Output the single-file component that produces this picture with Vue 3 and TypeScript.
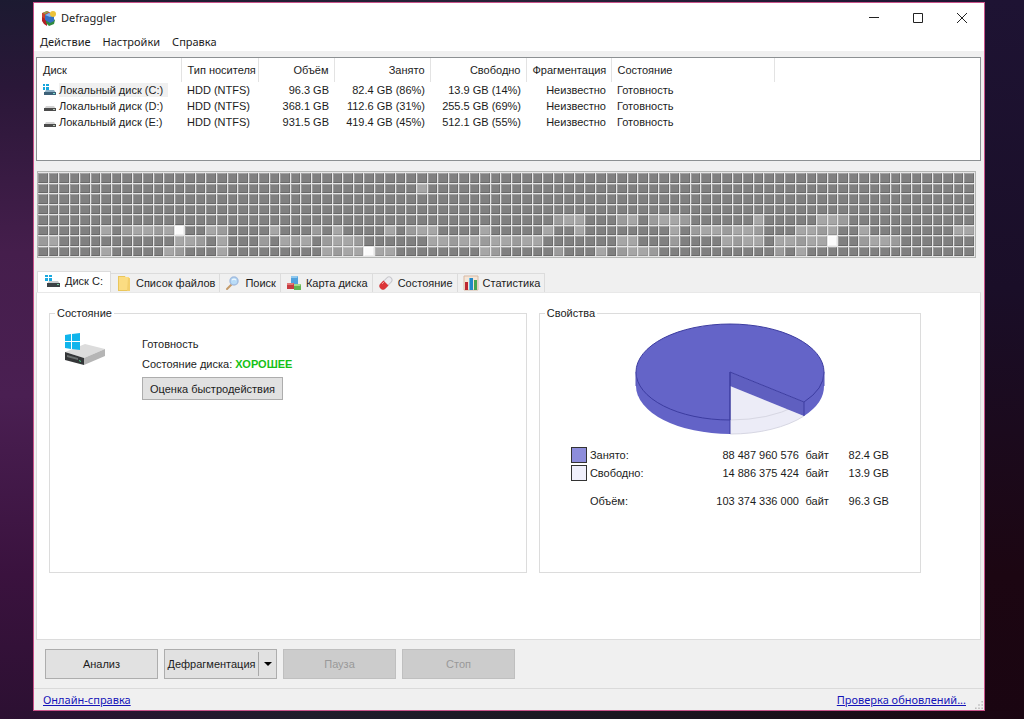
<script setup lang="ts">
import { ref } from 'vue'

interface Drive {
  name: string
  type: string
  size: string
  used: string
  free: string
  fragmentation: string
  state: string
  system: boolean
}

const drives: Drive[] = [
  { name: 'Локальный диск (C:)', type: 'HDD (NTFS)', size: '96.3 GB', used: '82.4 GB (86%)', free: '13.9 GB (14%)', fragmentation: 'Неизвестно', state: 'Готовность', system: true },
  { name: 'Локальный диск (D:)', type: 'HDD (NTFS)', size: '368.1 GB', used: '112.6 GB (31%)', free: '255.5 GB (69%)', fragmentation: 'Неизвестно', state: 'Готовность', system: false },
  { name: 'Локальный диск (E:)', type: 'HDD (NTFS)', size: '931.5 GB', used: '419.4 GB (45%)', free: '512.1 GB (55%)', fragmentation: 'Неизвестно', state: 'Готовность', system: false },
]

const COLUMNS = 89
const ROWS = 8

// Inclusive column ranges of partly filled blocks, per row
const partial: Record<number, [number, number][]> = {
  1: [[36, 36]],
  4: [[49, 51], [55, 56], [58, 61], [68, 68], [74, 76]],
  5: [[6, 6], [8, 12], [16, 17], [22, 22], [26, 26], [28, 28], [33, 33], [35, 37], [42, 42], [48, 48], [51, 51], [60, 60], [62, 68], [72, 75], [78, 78], [87, 88]],
  6: [[0, 1], [13, 15], [17, 17], [21, 21], [23, 25], [27, 30], [37, 47], [55, 56], [60, 60], [65, 68], [70, 74], [78, 81]],
  7: [[6, 6], [12, 13], [17, 17], [27, 30], [32, 33], [42, 43], [49, 49], [53, 53], [55, 58], [70, 70], [72, 72]],
}
const empty = ['5-13', '6-75', '7-31']

const blocks = Array.from({ length: COLUMNS * ROWS }, (_, i) => {
  const row = Math.floor(i / COLUMNS)
  const col = i % COLUMNS
  if (empty.includes(`${row}-${col}`)) return 'empty'
  const hit = (partial[row] ?? []).some(([from, to]) => col >= from && col <= to)
  if (!hit) return 'full'
  return (row * 5 + col * 7) % 3 === 0 ? 'half' : 'part'
})

const tabs = [
  { id: 'drive', label: 'Диск C:' },
  { id: 'files', label: 'Список файлов' },
  { id: 'search', label: 'Поиск' },
  { id: 'map', label: 'Карта диска' },
  { id: 'health', label: 'Состояние' },
  { id: 'stats', label: 'Статистика' },
]
const activeTab = ref('drive')
</script>

<template>
  <div class="desktop">
    <main class="window">
      <header class="titlebar">
        <svg class="logo" viewBox="0 0 16 16" aria-hidden="true">
          <path d="M1 3l5-2 4 2v6l-5 3-4-3z" fill="#c9432f" />
          <path d="M1 7l5 3v6l-3-2-2-3z" fill="#b32025" />
          <path d="M5 9l5-2 4 3-1 4-5 2-3-3z" fill="#2f8a3e" />
          <path d="M4 5l4-2 5 2v6l-4 2-5-3z" fill="#356fc4" />
          <path d="M4 5l4-2 5 2-4 2z" fill="#86b4ea" />
          <circle cx="12" cy="4" r="3" fill="#edc23a" />
          <path d="M2 3l4-2 2 1-4 2z" fill="#8ea64c" />
        </svg>
        <h1>Defraggler</h1>
        <div class="controls">
          <button type="button" aria-label="Свернуть"><svg viewBox="0 0 12 12"><path d="M1 5.500h10" /></svg></button>
          <button type="button" aria-label="Развернуть"><svg viewBox="0 0 12 12"><path d="M1.500 1.500h9v9h-9z" /></svg></button>
          <button type="button" aria-label="Закрыть"><svg viewBox="0 0 12 12"><path d="M1 1l10 10M11 1L1 11" /></svg></button>
        </div>
      </header>
      <nav class="menu">
        <button type="button">Действие</button>
        <button type="button">Настройки</button>
        <button type="button">Справка</button>
      </nav>

      <section class="drives">
        <table>
          <colgroup>
            <col class="c-name"><col class="c-type"><col class="c-size"><col class="c-used"><col class="c-used"><col class="c-frag"><col class="c-state"><col>
          </colgroup>
          <thead>
            <tr>
              <th>Диск</th><th>Тип носителя</th><th class="num">Объём</th><th class="num">Занято</th>
              <th class="num">Свободно</th><th class="num">Фрагментация</th><th>Состояние</th><td></td>
            </tr>
          </thead>
          <tbody>
            <tr v-for="d in drives" :key="d.name">
              <td class="name">
                <svg viewBox="0 0 14 12" aria-hidden="true">
                  <path d="M3 6h8l2 3H1z" :fill="d.system ? '#8fb0c4' : '#d3d3d3'" />
                  <path d="M1 8h12v3H1z" :fill="d.system ? '#3d6178' : '#4c4c4c'" />
                  <path d="M10 9h2v1h-2z" :fill="d.system ? '#7fe0d0' : '#b8c8b8'" />
                  <path v-if="d.system" d="M0 0h2v2H0zM3 0h3v2H3zM0 3h2v3H0zM3 3h3v3H3z" fill="#16a5dc" />
                </svg>
                <span :class="{ selected: d.system }">{{ d.name }}</span>
              </td>
              <td>{{ d.type }}</td>
              <td class="num">{{ d.size }}</td>
              <td class="num">{{ d.used }}</td>
              <td class="num">{{ d.free }}</td>
              <td class="num">{{ d.fragmentation }}</td>
              <td>{{ d.state }}</td>
              <td></td>
            </tr>
          </tbody>
        </table>
      </section>

      <section class="blockmap" aria-label="Карта диска">
        <i v-for="(b, i) in blocks" :key="i" :class="b"></i>
      </section>

      <div class="tabs" role="tablist">
        <button
          v-for="t in tabs"
          :key="t.id"
          type="button"
          role="tab"
          :aria-selected="activeTab === t.id"
          :class="{ active: activeTab === t.id }"
          @click="activeTab = t.id"
        >
          <svg v-if="t.id === 'drive'" viewBox="0 0 16 16" aria-hidden="true">
            <path d="M4 8h9l2 3H2z" fill="#c8ccce" /><path d="M2 10h13v4H2z" fill="#3c4246" /><path d="M12 11h2v1h-2z" fill="#72d0a0" />
            <path d="M0 2h3v2H0zM4 2h3v2H4zM0 5h3v3H0zM4 5h3v3H4z" fill="#1ba9df" />
          </svg>
          <svg v-else-if="t.id === 'files'" viewBox="0 0 16 16" aria-hidden="true">
            <path d="M2 1h7l1 2h4v13H2z" fill="#eac65b" /><path d="M3 2h10v13H3z" fill="#fbdc82" /><path d="M12 3h2v13h-3z" fill="#f3cf6c" />
          </svg>
          <svg v-else-if="t.id === 'search'" viewBox="0 0 16 16" aria-hidden="true">
            <path d="M7 9l-5 5" stroke="#c59a68" stroke-width="2" stroke-linecap="round" /><circle cx="9" cy="6" r="4" fill="#b9dcf7" stroke="#a3bde0" stroke-width="1.500" /><path d="M7 5q2-2 4 0" fill="none" stroke="#fff" />
          </svg>
          <svg v-else-if="t.id === 'map'" viewBox="0 0 16 16" aria-hidden="true">
            <path d="M5 1h7v8H5z" fill="#51a2dd" /><path d="M5 1h7l-1 2H5z" fill="#91c9ef" /><path d="M1 8h7v6H1z" fill="#c83b40" /><path d="M1 8h7l-1 2H1z" fill="#e17a79" /><path d="M8 9h7v6H8z" fill="#64b552" /><path d="M8 9h7l-1 2H8z" fill="#a5db8f" />
          </svg>
          <svg v-else-if="t.id === 'health'" viewBox="0 0 16 16" aria-hidden="true">
            <path d="M5 11l6-6" stroke="#c8c8cc" stroke-width="7" stroke-linecap="round" /><path d="M5 11l6-6" stroke="#ececf0" stroke-width="5" stroke-linecap="round" /><path d="M5.500 5.500l5 5-3 3a3.500 3.500 0 0 1-5-5z" fill="#dc3438" /><path d="M4 9l2-2" stroke="#f49b9b" />
          </svg>
          <svg v-else viewBox="0 0 16 16" aria-hidden="true">
            <path d="M1 1h14v14H1z" fill="#f5e6d8" stroke="#d8b9a3" /><path d="M2 7h3v8H2z" fill="#bd2732" /><path d="M6 3h4v12H6z" fill="#2288c6" /><path d="M11 5h3v10h-3z" fill="#46a650" /><path d="M6 3h1v12H6z" fill="#6abce5" />
          </svg>
          {{ t.label }}
        </button>
      </div>

      <section class="page">
        <fieldset>
          <legend>Состояние</legend>
          <div class="status">
            <svg viewBox="0 0 44 36" aria-hidden="true">
              <path d="M2 20L22 12l20 5-21 9z" fill="#dcdcdc" />
              <path d="M21 26l21-9v7L21 33z" fill="#b5b5b5" />
              <path d="M2 20l19 6v7L2 28z" fill="#343638" />
              <path d="M4 23l11 3v2L4 25z" fill="#6b7070" />
              <path d="M16 28l2 1v1l-2-1z" fill="#4cd08a" />
              <path d="M2 3l6-1v7H2zM9 2l8-1v8H9zM2 10h6v7l-6-1zM9 10h8v8l-8-1z" fill="#10b5ec" />
            </svg>
            <div class="info">
              <p>Готовность</p>
              <p>Состояние диска: <strong>ХОРОШЕЕ</strong></p>
              <button type="button">Оценка быстродействия</button>
            </div>
          </div>
        </fieldset>

        <fieldset class="properties">
          <legend>Свойства</legend>
          <svg class="pie" viewBox="0 0 192 114" role="img" aria-label="Занято 86%, свободно 14%">
            <path d="M96 64V112A94 48 0 0 0 170 94L96 64z" fill="#ececf7" />
            <path d="M96 98A94 48 0 0 0 162 84M96 112A94 48 0 0 0 170 94" fill="none" stroke="#d7d7e3" />
            <path d="M2 50V64A94 48 0 0 0 96 112V50z" fill="#6363c7" />
            <path d="M96 50V64L170 94V80z" fill="#5f5fc0" />
            <path d="M170 80V94A94 48 0 0 0 190 64V50z" fill="#6363c7" />
            <path d="M96 50V98A94 48 0 0 1 2 50A94 48 0 0 1 190 50A94 48 0 0 1 170 80z" fill="#6464c8" stroke="#3c3ca0" />
            <path d="M96 50V112M170 80V94" fill="none" stroke="#3c3ca0" />
            <path d="M2 50V64M190 50V64" stroke="#5555b5" />
          </svg>
          <table>
            <colgroup><col class="p-swatch"><col><col class="p-bytes"><col class="p-unit"><col class="p-gb"></colgroup>
            <tbody>
              <tr><td><i class="swatch used"></i></td><th>Занято:</th><td class="num">88 487 960 576</td><td class="num">байт</td><td class="num">82.4 GB</td></tr>
              <tr><td><i class="swatch"></i></td><th>Свободно:</th><td class="num">14 886 375 424</td><td class="num">байт</td><td class="num">13.9 GB</td></tr>
              <tr class="total"><td></td><th>Объём:</th><td class="num">103 374 336 000</td><td class="num">байт</td><td class="num">96.3 GB</td></tr>
            </tbody>
          </table>
        </fieldset>
      </section>

      <div class="actions">
        <button type="button">Анализ</button>
        <div class="split">
          <button type="button">Дефрагментация</button>
          <button type="button" class="arrow" aria-label="Варианты дефрагментации"><svg viewBox="0 0 8 4"><path d="M0 0h8L4 4z" /></svg></button>
        </div>
        <button type="button" disabled>Пауза</button>
        <button type="button" disabled>Стоп</button>
      </div>

      <footer class="statusbar">
        <a href="#help">Онлайн-справка</a>
        <a href="#update">Проверка обновлений...</a>
        <svg viewBox="0 0 10 10" aria-hidden="true"><path d="M8 0h2v2H8zM4 4h2v2H4zM8 4h2v2H8zM0 8h2v2H0zM4 8h2v2H4zM8 8h2v2H8z" fill="#bcbcbc" /></svg>
      </footer>
    </main>
  </div>
</template>

<style>
body {
  margin: 0;
}
</style>

<style scoped>
* {
  box-sizing: border-box;
}
.desktop {
  display: flex;
  min-height: 100vh;
  padding: 2px 39px 8px 33px;
  background:
    linear-gradient(90deg, #2c1032, #1f1c2b 30%, #1b1620 60%, #1a0511) bottom / 100% 8px no-repeat,
    linear-gradient(180deg, #1e1333, #1a0e28 40%, #1c0612 80%, #1a0511) right / 39px 100% no-repeat,
    linear-gradient(90deg, #1c1a31, #262338 50%, #1e1333) top / 100% 2px no-repeat,
    linear-gradient(180deg, #1c1a31 0%, #2a1738 12%, #451e4c 35%, #4a1f52 55%, #3a123e 80%, #2c1032 100%);
  font: 11px/14px "Liberation Sans", Arial, sans-serif;
  color: #1c1c1c;
}
button {
  font: inherit;
  color: inherit;
}
.window {
  flex: 1;
  min-width: 0;
  display: flex;
  flex-direction: column;
  border: 1px solid #c9538a;
  background: #f0f0f0;
}
.titlebar {
  display: flex;
  align-items: center;
  height: 29px;
  padding-left: 7px;
  background: #fff;
}
.logo {
  width: 16px;
  height: 16px;
}
h1 {
  flex: 1;
  margin: 0;
  padding-left: 4px;
  font: 11px/16px "Noto Sans", sans-serif;
}
.controls {
  display: flex;
}
.controls button {
  display: grid;
  place-items: center;
  width: 44px;
  height: 28px;
  padding: 0;
  border: 0;
  background: none;
}
.controls svg {
  width: 12px;
  height: 12px;
  fill: none;
  stroke: #222;
}
.menu {
  display: flex;
  gap: 12px;
  height: 19px;
  padding-left: 6px;
  background: #fff;
}
.menu button {
  padding: 0;
  border: 0;
  background: none;
  font: 11px/19px "Noto Sans", sans-serif;
}
.drives {
  margin: 6px 3px 0 2px;
  min-height: 104px;
  border: 1px solid #8c9092;
  background: #fff;
}
table {
  table-layout: fixed;
  width: 100%;
  border-collapse: collapse;
}
th {
  font-weight: normal;
  text-align: left;
}
td,
th {
  padding: 0 5px 0 6px;
  white-space: nowrap;
}
.drives thead th {
  height: 24px;
  border-right: 1px solid #e3e3e3;
}
.drives tbody td {
  height: 16px;
}
.num {
  text-align: right;
}
.c-name { width: 144px; }
.c-type { width: 77px; }
.c-size { width: 76px; }
.c-used { width: 96px; }
.c-frag { width: 85px; }
.c-state { width: 163px; }
.drives .name {
  display: flex;
  align-items: center;
  gap: 2px;
}
.name svg {
  flex: none;
  width: 14px;
  height: 12px;
}
.name .selected {
  padding-right: 5px;
  background: #f0f0f0;
}
.blockmap {
  display: grid;
  grid-template-columns: repeat(89, 1fr);
  grid-template-rows: repeat(8, 1fr);
  height: 87px;
  margin: 10px 8px 0 3px;
  padding: 1px 0 0 0;
  border: 1px solid #b4b6b4;
  background: #e6e6e6;
}
.blockmap i {
  margin: 0 1px 1px 0;
  border: 1px solid;
  border-color: #a3a3a3 #6e6e6e #686868 #9a9a9a;
  background: #808080;
}
.blockmap .part {
  border-color: #bebebe #9b9b9b #909090 #b4b4b4;
  background: #a6a6a6;
}
.blockmap .half {
  border-color: #b2b2b2 #909090 #888 #ababab;
  background: #9b9b9b;
}
.blockmap .empty {
  border-color: #fff #eee #eee #fff;
  background: #fbfbfb;
}
.tabs {
  display: flex;
  align-items: flex-end;
  height: 21px;
  margin: 13px 3px 0 3px;
}
.tabs button {
  display: flex;
  align-items: center;
  gap: 4px;
  height: 19px;
  padding: 0 4px 0 5px;
  border: 1px solid #dcdcdc;
  border-width: 1px 1px 0 0;
  background: #f0f0f0;
  white-space: nowrap;
}
.tabs .active {
  height: 21px;
  padding: 0 7px 2px 7px;
  border-left-width: 1px;
  background: #fff;
}
.tabs svg {
  width: 16px;
  height: 16px;
}
.page {
  flex: 1;
  display: grid;
  grid-template-columns: 5fr 4fr;
  gap: 12px;
  align-items: start;
  margin: 0 3px 0 2px;
  padding: 13px 59px 60px 12px;
  border: 1px solid #dcdcdc;
  border-top-color: #e8e8e8;
  background: #fff;
}
fieldset {
  min-width: 0;
  min-height: 267px;
  margin: 0;
  padding: 0;
  border: 1px solid #dcdcdc;
}
legend {
  margin-left: 5px;
  padding: 0 2px;
}
.status {
  display: grid;
  grid-template-columns: 79px 1fr;
  padding: 12px 0 0 13px;
}
.status svg {
  width: 44px;
  height: 36px;
}
.info {
  padding-top: 5px;
}
.info p {
  margin: 0 0 6px;
}
.info strong {
  color: #16c116;
}
.info button {
  height: 23px;
  padding: 0 7px;
  border: 1px solid #adadad;
  background: #e1e1e1;
}
.pie {
  display: block;
  width: 192px;
  height: 114px;
  margin: 2px auto 10px;
}
.properties table {
  width: 318px;
  margin: 0 auto;
}
.properties td,
.properties th {
  height: 18px;
  padding: 0;
}
.properties .total td,
.properties .total th {
  height: 38px;
}
.p-swatch { width: 19px; }
.p-bytes { width: 110px; }
.p-unit { width: 30px; }
.p-gb { width: 60px; }
.swatch {
  display: block;
  width: 16px;
  height: 16px;
  border: 1px solid #333;
  background: #f0f0fc;
}
.swatch.used {
  background: #8d8ddb;
}
.actions {
  display: flex;
  gap: 6px;
  padding: 9px 11px;
}
.actions > * {
  width: 113px;
  height: 30px;
  padding: 0;
  border: 1px solid #adadad;
  background: #e1e1e1;
}
.actions > button:disabled {
  border-color: #bfbfbf;
  background: #ccc;
  color: #999;
}
.split {
  display: flex;
  align-items: center;
}
.split button {
  flex: 1;
  padding: 0;
  border: 0;
  background: none;
}
.split .arrow {
  flex: none;
  display: grid;
  place-items: center;
  width: 18px;
  height: 24px;
  border-left: 1px solid #a8a8a8;
}
.arrow svg {
  width: 8px;
  height: 4px;
}
.statusbar {
  display: flex;
  align-items: center;
  height: 22px;
  padding: 0 1px 0 9px;
  border-top: 1px solid #dadada;
  font: 11px/16px "Noto Sans", sans-serif;
}
.statusbar a {
  color: #1414b8;
}
.statusbar a + a {
  margin-left: auto;
}
.statusbar svg {
  align-self: flex-end;
  width: 8px;
  height: 8px;
  margin: 0 0 1px 9px;
}
</style>
